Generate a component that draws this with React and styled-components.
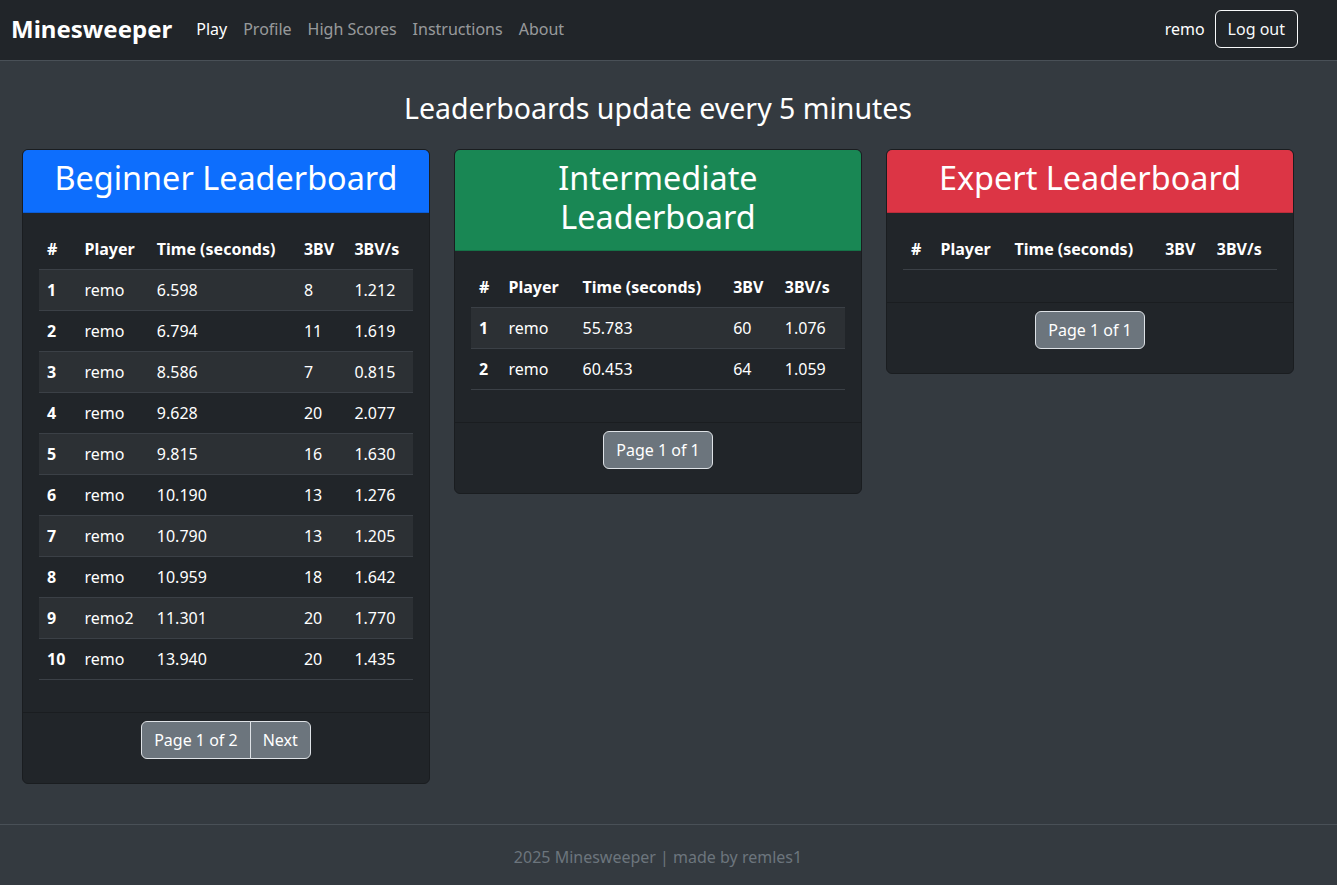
import React from "react";
import styled, { createGlobalStyle } from "styled-components";

const Global = createGlobalStyle`
  * { box-sizing: border-box; }
  html, body { margin: 0; padding: 0; }
  body {
    background: #343a40;
    color: #dee2e6;
    font-family: "Noto Sans", "Open Sans", sans-serif;
    font-size: 16px;
    line-height: 1.5;
  }
`;

const Page = styled.div`
  min-height: 885px;
  display: flex;
  flex-direction: column;
`;

const Navbar = styled.nav`
  height: 61px;
  background: #212529;
  border-bottom: 1px solid #495057;
  display: flex;
  align-items: center;
  padding: 0 39px 2px 11px;
`;

const Brand = styled.a`
  font-size: 24px;
  font-weight: 700;
  color: #fff;
  text-decoration: none;
  margin-right: 16px;
  line-height: 1.5;
`;

const NavList = styled.div`
  display: flex;
  align-items: center;
  flex: 1;
`;

const NavLink = styled.a`
  padding: 0 8px;
  color: ${(p) => (p.$active ? "#fff" : "rgba(255,255,255,0.55)")};
  text-decoration: none;
  font-size: 16px;
`;

const UserArea = styled.div`
  display: flex;
  align-items: center;
  gap: 10px;
`;

const UserName = styled.span`
  color: #fff;
  font-size: 16px;
`;

const OutlineButton = styled.button`
  font-family: inherit;
  font-size: 16px;
  line-height: 1.5;
  color: #f8f9fa;
  background: transparent;
  border: 1px solid #f8f9fa;
  border-radius: 6px;
  padding: 6px 12px;
`;

const Main = styled.main`
  flex: 1;
  padding: 30px 43px 39px 22px;
`;

const Heading = styled.h3`
  margin: 0 0 24px;
  text-align: center;
  font-size: 28.5px;
  font-weight: 400;
  line-height: 1.2;
  color: #fff;
`;

const Boards = styled.div`
  display: flex;
  align-items: flex-start;
  gap: 24px;
`;

const Card = styled.section`
  width: 408px;
  background: #212529;
  border: 1px solid #1a1d20;
  border-radius: 6px;
  overflow: hidden;
`;

const CardHeader = styled.div`
  background: ${(p) => p.$color};
  padding: 8px 16px;
  border-bottom: 1px solid rgba(0, 0, 0, 0.15);
`;

const CardTitle = styled.h2`
  margin: 0 0 7px;
  text-align: center;
  font-size: 32.4px;
  font-weight: 400;
  line-height: 38.4px;
  color: #fff;
`;

const CardBody = styled.div`
  padding: 16px;
`;

const Table = styled.table`
  width: 100%;
  border-collapse: collapse;
  margin-bottom: 16px;
  color: #fff;
`;

const Th = styled.th`
  text-align: left;
  font-weight: 700;
  padding: 8px;
  border-bottom: 1px solid #3b4046;
  line-height: 24px;
`;

const Row = styled.tr`
  background: ${(p) => (p.$striped ? "#2c3034" : "transparent")};
`;

const Td = styled.td`
  padding: 8px;
  border-bottom: 1px solid #3b4046;
  line-height: 24px;
  font-weight: ${(p) => (p.$bold ? 700 : 400)};
`;

const CardFooter = styled.div`
  border-top: 1px solid #1a1d20;
  padding: 8px 16px 24px;
  display: flex;
  justify-content: center;
`;

const ButtonGroup = styled.div`
  display: inline-flex;
`;

const PageButton = styled.button`
  font-family: inherit;
  font-size: 16px;
  line-height: 1.5;
  color: #fff;
  background: #6c757d;
  border: 1px solid #dee2e6;
  padding: 6px 12px;
  border-radius: 6px;
  &:not(:last-child) {
    border-top-right-radius: 0;
    border-bottom-right-radius: 0;
  }
  &:not(:first-child) {
    border-top-left-radius: 0;
    border-bottom-left-radius: 0;
    margin-left: -1px;
  }
`;

const Footer = styled.footer`
  border-top: 1px solid #495057;
  height: 61px;
  display: flex;
  align-items: center;
  justify-content: center;
  padding: 3px 21px 0 0;
  color: #6c757d;
  font-size: 16px;
`;

const boards = [
  {
    title: "Beginner Leaderboard",
    color: "#0d6efd",
    pages: 2,
    rows: [
      ["remo", "6.598", 8, "1.212"],
      ["remo", "6.794", 11, "1.619"],
      ["remo", "8.586", 7, "0.815"],
      ["remo", "9.628", 20, "2.077"],
      ["remo", "9.815", 16, "1.630"],
      ["remo", "10.190", 13, "1.276"],
      ["remo", "10.790", 13, "1.205"],
      ["remo", "10.959", 18, "1.642"],
      ["remo2", "11.301", 20, "1.770"],
      ["remo", "13.940", 20, "1.435"],
    ],
  },
  {
    title: "Intermediate Leaderboard",
    color: "#198754",
    pages: 1,
    rows: [
      ["remo", "55.783", 60, "1.076"],
      ["remo", "60.453", 64, "1.059"],
    ],
  },
  {
    title: "Expert Leaderboard",
    color: "#dc3545",
    pages: 1,
    rows: [],
  },
];

function Board({ title, color, pages, rows }) {
  return (
    <Card>
      <CardHeader $color={color}>
        <CardTitle>{title}</CardTitle>
      </CardHeader>
      <CardBody>
        <Table>
          <thead>
            <tr>
              <Th>#</Th>
              <Th>Player</Th>
              <Th>Time (seconds)</Th>
              <Th>3BV</Th>
              <Th>3BV/s</Th>
            </tr>
          </thead>
          <tbody>
            {rows.map((r, i) => (
              <Row key={i} $striped={i % 2 === 0}>
                <Td $bold>{i + 1}</Td>
                <Td>{r[0]}</Td>
                <Td>{r[1]}</Td>
                <Td>{r[2]}</Td>
                <Td>{r[3]}</Td>
              </Row>
            ))}
          </tbody>
        </Table>
      </CardBody>
      <CardFooter>
        <ButtonGroup>
          <PageButton>Page 1 of {pages}</PageButton>
          {pages > 1 && <PageButton>Next</PageButton>}
        </ButtonGroup>
      </CardFooter>
    </Card>
  );
}

export default function App() {
  return (
    <Page>
      <Global />
      <Navbar>
        <Brand href="#">Minesweeper</Brand>
        <NavList>
          <NavLink $active href="#">Play</NavLink>
          <NavLink href="#">Profile</NavLink>
          <NavLink href="#">High Scores</NavLink>
          <NavLink href="#">Instructions</NavLink>
          <NavLink href="#">About</NavLink>
        </NavList>
        <UserArea>
          <UserName>remo</UserName>
          <OutlineButton>Log out</OutlineButton>
        </UserArea>
      </Navbar>
      <Main>
        <Heading>Leaderboards update every 5 minutes</Heading>
        <Boards>
          {boards.map((b) => (
            <Board key={b.title} {...b} />
          ))}
        </Boards>
      </Main>
      <Footer>2025 Minesweeper | made by remles1</Footer>
    </Page>
  );
}
